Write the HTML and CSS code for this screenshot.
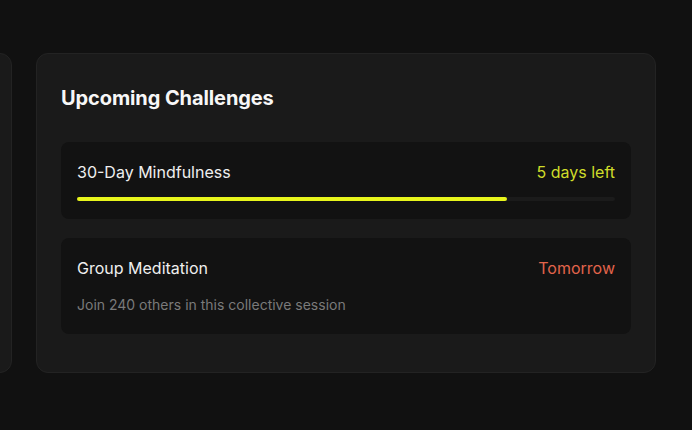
FILE: index.html
```html
<!DOCTYPE html>
<html lang="en">
<head>
<meta charset="utf-8">
<title>Upcoming Challenges</title>
<link rel="stylesheet" href="styles.css">
</head>
<body>
<div class="layout">
  <section class="card card-side"></section>
  <section class="card card-main">
    <h2 class="card-title">Upcoming Challenges</h2>
    <div class="items">
      <div class="item">
        <div class="item-row">
          <span class="item-name">30-Day Mindfulness</span>
          <span class="item-meta meta-yellow">5 days left</span>
        </div>
        <div class="track"><div class="fill" style="width:80%"></div></div>
      </div>
      <div class="item">
        <div class="item-row">
          <span class="item-name">Group Meditation</span>
          <span class="item-meta meta-red">Tomorrow</span>
        </div>
        <p class="item-desc">Join 240 others in this collective session</p>
      </div>
    </div>
  </section>
</div>
</body>
</html>
```
FILE: styles.css
```css
* { box-sizing: border-box; }
html, body { margin: 0; padding: 0; }
body {
  background: #111111;
  font-family: Inter, "Noto Sans", sans-serif;
  color: #f2f2f2;
  width: 692px;
  height: 430px;
  overflow: hidden;
}
.layout {
  display: flex;
  gap: 24px;
  padding-top: 53px;
  margin-left: -288px;
}
.card {
  background: #1a1a1a;
  border: 1px solid #232323;
  border-radius: 12px;
  height: 320px;
}
.card-side { width: 300px; flex: none; }
.card-main {
  width: 620px;
  flex: none;
  padding: 30px 24px 24px;
}
.card-title {
  margin: 0;
  font-size: 20px;
  line-height: 28px;
  font-weight: 700;
  color: #f7f7f7;
  letter-spacing: -0.1px;
}
.items {
  margin-top: 30px;
  display: flex;
  flex-direction: column;
  gap: 19px;
}
.item {
  background: #121212;
  border-radius: 8px;
  padding: 18px 16px 18px;
}
.item-row {
  display: flex;
  justify-content: space-between;
  align-items: center;
  height: 24px;
}
.item-name {
  font-size: 16px;
  color: #efefef;
}
.item-meta { font-size: 16px; }
.meta-yellow { color: #cfdd2a; }
.meta-red { color: #e2644b; }
.track {
  margin-top: 13px;
  height: 4px;
  background: #1b1b1b;
  border-radius: 2px;
}
.fill {
  height: 100%;
  background: #e8f51c;
  border-radius: 2px;
}
.item-desc {
  margin: 15px 0 0;
  font-size: 14px;
  line-height: 20px;
  color: #7a7a7a;
  padding-bottom: 1px;
}
```
